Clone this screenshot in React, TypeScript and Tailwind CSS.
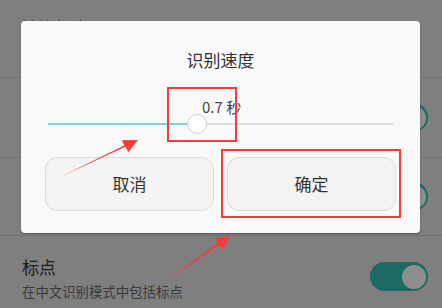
import React from "react";

const font = { fontFamily: '"Noto Sans CJK SC", "Noto Sans", sans-serif' };

function Switch() {
  return (
    <div className="w-[58px] h-[29px] rounded-full bg-[#1d6a65] flex items-center justify-end pr-[2px]">
      <div className="w-[24px] h-[24px] rounded-full bg-[#8e8e8e]" />
    </div>
  );
}

export default function App() {
  return (
    <div
      className="relative w-[442px] h-[308px] overflow-hidden bg-[#7f7f7f]"
      style={font}
    >
      {/* background settings list */}
      <div className="flex flex-col">
        <div className="h-[77px] pl-[21px] pt-[16px]">
          <div className="text-[17px] leading-[24px] text-[#1e1e1e]">转换标点</div>
        </div>
        <div className="h-px bg-[#737373]" />
        <div className="h-[79px] flex items-center justify-end pr-[14px]">
          <Switch />
        </div>
        <div className="h-px bg-[#737373]" />
        <div className="h-[77px] flex items-center justify-end pr-[14px]">
          <Switch />
        </div>
        <div className="h-px bg-[#737373]" />
        <div className="flex items-center justify-between pl-[22px] pr-[14px] pt-[19px]">
          <div className="flex flex-col">
            <div className="text-[17px] leading-[24px] text-[#1e1e1e]">标点</div>
            <div className="mt-[3px] text-[13.4px] leading-[18px] text-[#3a3a3a]">
              在中文识别模式中包括标点
            </div>
          </div>
          <div className="mt-[-2px]">
            <Switch />
          </div>
        </div>
      </div>

      {/* dialog */}
      <div className="absolute left-[21px] top-[21px] w-[399px] h-[212px] rounded-[4px] bg-[#f9f9f9] shadow-[0_1px_2px_rgba(0,0,0,0.35)] flex flex-col pt-[27px]">
        <div className="text-center text-[17px] leading-[24px] text-[#333333]">识别速度</div>
        <div className="px-[27px] flex flex-col">
          <div className="mt-[26px] ml-[154px] text-[15px] leading-[18px] text-[#444444]">
            0.7 秒
          </div>
          <div className="relative h-[16px] flex items-center">
            <div className="w-[149px] h-[2px] bg-[#7fd2d4]" />
            <div className="flex-1 h-[2px] bg-[#dddddd]" />
            <div className="absolute left-[139px] top-[-2px] w-[20px] h-[20px] rounded-full bg-white border border-[#cfcfcf]" />
          </div>
        </div>
        <div className="mt-[25px] px-[24px] flex gap-[13px]">
          <div className="flex-1 h-[54px] rounded-[12px] bg-[#f3f3f3] border border-[#dadada] flex items-center justify-center text-[17px] text-[#333333]">
            取消
          </div>
          <div className="flex-1 h-[54px] rounded-[12px] bg-[#f3f3f3] border border-[#dadada] flex items-center justify-center text-[17px] text-[#333333]">
            确定
          </div>
        </div>
      </div>

      {/* annotation boxes */}
      <div className="absolute left-[167px] top-[87px] w-[70px] h-[55px] border-2 border-[#f93a3a]" />
      <div className="absolute left-[221px] top-[149px] w-[180px] h-[69px] border-2 border-[#f93a3a]" />

      {/* annotation arrows */}
      <svg className="absolute inset-0" width="442" height="308" viewBox="0 0 442 308">
        <polygon
          points="60,177 125.5,146.8 128.3,152.3 138,140 121.9,140.2 124.3,145.5"
          fill="#f93a3a"
        />
        <polygon
          points="166,281 219.2,244.8 222.7,249.6 230,236 214.5,238.6 217.6,243.1"
          fill="#f93a3a"
        />
      </svg>
    </div>
  );
}
